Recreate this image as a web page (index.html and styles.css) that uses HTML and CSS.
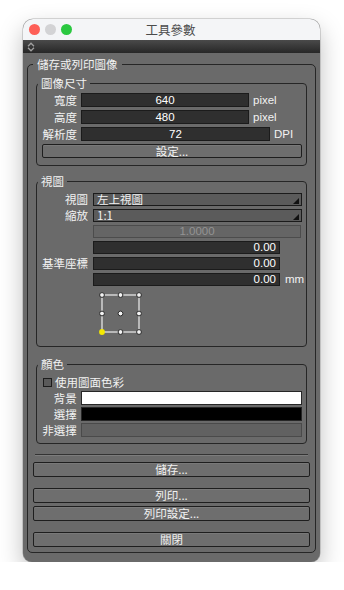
FILE: index.html
```html
<!DOCTYPE html>
<html lang="zh-Hant">
<head>
    <meta charset="UTF-8">
    <meta name="viewport" content="width=device-width, initial-scale=1.0">
    <title>工具參數</title>
    <link rel="stylesheet" href="styles.css">
</head>
<body>

    <div class="window">
        <header class="titlebar">
            <div class="lights">
                <span class="light red"></span>
                <span class="light gray"></span>
                <span class="light green"></span>
            </div>
            <div class="title">工具參數</div>
        </header>

        <div class="toolstrip">
            <svg class="strip-icon" width="8" height="10" viewBox="0 0 8 10">
                <path d="M1 4.2 L4 1.2 L7 4.2 M1 5.8 L4 8.8 L7 5.8" fill="none" stroke="#a0a0a0" stroke-width="1.3"/>
            </svg>
        </div>

        <main class="content">
            <fieldset class="group outer">
                <legend>儲存或列印圖像</legend>

                <!-- image size -->
                <fieldset class="group sub size-group">
                    <legend>圖像尺寸</legend>
                    <div class="row">
                        <span class="label">寬度</span>
                        <span class="field dark w168">640</span>
                        <span class="unit">pixel</span>
                    </div>
                    <div class="row">
                        <span class="label">高度</span>
                        <span class="field dark w168">480</span>
                        <span class="unit">pixel</span>
                    </div>
                    <div class="row">
                        <span class="label">解析度</span>
                        <span class="field dark w189">72</span>
                        <span class="unit">DPI</span>
                    </div>
                    <button class="btn btn-small">設定...</button>
                </fieldset>

                <!-- view -->
                <fieldset class="group sub view-group">
                    <legend>視圖</legend>
                    <div class="view-grid">
                        <span class="label">視圖</span>
                        <span class="select">左上視圖
                            <svg class="caret" width="6" height="6" viewBox="0 0 6 6"><polygon points="0,6 6,6 6,0" fill="#111"/></svg>
                        </span>

                        <span class="label">縮放</span>
                        <span class="select">1:1
                            <svg class="caret" width="6" height="6" viewBox="0 0 6 6"><polygon points="0,6 6,6 6,0" fill="#111"/></svg>
                        </span>

                        <span class="field disabled scale">1.0000</span>

                        <span class="label base-label">基準座標</span>
                        <span class="field dark coord">0.00</span>
                        <span class="field dark coord">0.00</span>
                        <span class="field dark coord">0.00</span>
                        <span class="unit mm">mm</span>

                        <svg class="anchor" width="44" height="44" viewBox="0 0 44 44">
                            <rect x="3" y="3" width="37" height="37" fill="none" stroke="#dcdcdc" stroke-width="1.4"/>
                            <g fill="#f4f4f4" stroke="#2a2a2a" stroke-width="1">
                                <circle cx="3" cy="3" r="2.4"/>
                                <circle cx="21.5" cy="3" r="2.4"/>
                                <circle cx="40" cy="3" r="2.4"/>
                                <circle cx="3" cy="21.5" r="2.4"/>
                                <circle cx="21.5" cy="21.5" r="2.4"/>
                                <circle cx="40" cy="21.5" r="2.4"/>
                                <circle cx="21.5" cy="40" r="2.4"/>
                                <circle cx="40" cy="40" r="2.4"/>
                            </g>
                            <circle cx="3" cy="40" r="2.9" fill="#f5e900"/>
                        </svg>
                    </div>
                </fieldset>

                <!-- colour -->
                <fieldset class="group sub color-group">
                    <legend>顏色</legend>
                    <label class="check-row">
                        <span class="checkbox"></span>
                        <span>使用圖面色彩</span>
                    </label>
                    <div class="row row-color">
                        <span class="label">背景</span>
                        <span class="swatch white"></span>
                    </div>
                    <div class="row row-color">
                        <span class="label">選擇</span>
                        <span class="swatch black"></span>
                    </div>
                    <div class="row row-color">
                        <span class="label">非選擇</span>
                        <span class="swatch none"></span>
                    </div>
                </fieldset>

                <div class="separator"></div>

                <button class="btn save">儲存...</button>
                <button class="btn print">列印...</button>
                <button class="btn print-setup">列印設定...</button>
                <button class="btn close">關閉</button>
            </fieldset>
        </main>
    </div>

</body>
</html>
```

FILE: styles.css
```css
:root {
    --panel: #6a6a6a;
    --frame: #262626;
    --field-dark: #2f2f2f;
    --text: #f2f2f2;
    --font-ui: "Liberation Sans", "Noto Sans CJK TC", sans-serif;
}

body {
    margin: 0;
    background: #ffffff;
    font-family: var(--font-ui);
    color: var(--text);
}

/* --- Window chrome --- */
.window {
    width: 297px;
    margin: 19px 0 0 23px;
    background: var(--panel);
    border-radius: 10px 10px 9px 9px;
    overflow: hidden;
    box-shadow: 0 0 0 0.5px rgba(0, 0, 0, 0.28), 0 10px 24px rgba(0, 0, 0, 0.26);
}

.titlebar {
    height: 21px;
    background: #f4f5f7;
    display: grid;
    grid-template-columns: 1fr auto 1fr;
    align-items: center;
}

.lights {
    display: flex;
    gap: 5px;
    padding-left: 6px;
}

.light {
    width: 11px;
    height: 11px;
    border-radius: 50%;
}

.light.red { background: #fe5f57; }
.light.gray { background: #d3d3d5; }
.light.green { background: #2bc840; }

.title {
    font-family: "Noto Sans CJK TC", sans-serif;
    font-size: 12.5px;
    line-height: 21px;
    color: #4b4b4b;
    padding-right: 2px;
}

.toolstrip {
    height: 13px;
    background: linear-gradient(#4a4a4a, #272727);
    display: flex;
    align-items: center;
    padding-left: 4px;
}

.content {
    padding: 4px 4px 9px;
}

/* --- Group boxes --- */
.group {
    margin: 0;
    border: 1px solid var(--frame);
    border-radius: 5px;
    min-width: 0;
}

.group legend {
    font-family: "Noto Sans CJK TC", sans-serif;
    font-size: 11.5px;
    line-height: 14px;
    color: var(--text);
}

.outer {
    padding: 0 5px 5px;
}

.outer > legend {
    padding: 0 4px;
}

.sub {
    margin: 0 3px;
    padding: 0 4px 7px 4px;
    border-radius: 4px;
}

.sub > legend {
    padding: 0 3px;
    margin-left: -3px;
}

.size-group { margin-top: 5px; padding-top: 3px; }
.view-group { margin-top: 8px; padding-top: 5px; padding-bottom: 10px; }
.color-group { margin-top: 10px; padding-top: 4px; padding-bottom: 6px; }

/* --- Rows --- */
.row {
    display: flex;
    align-items: center;
    height: 14px;
    margin-bottom: 3px;
}

.label {
    font-family: "Noto Sans CJK TC", sans-serif;
    font-size: 11.5px;
    line-height: 14px;
    width: 36px;
    margin-right: 4px;
    text-align: right;
    white-space: nowrap;
    color: var(--text);
}

.unit {
    font-size: 11.5px;
    margin-left: 4px;
    color: var(--text);
}

.field {
    box-sizing: border-box;
    height: 14px;
    font-size: 11.5px;
    line-height: 12px;
    text-align: center;
    border: 1px solid #1b1b1b;
    color: #ffffff;
}

.field.dark {
    background: var(--field-dark);
}

.w168 { width: 168px; }
.w189 { width: 189px; }

/* --- View grid --- */
.view-grid {
    display: grid;
    grid-template-columns: 46px 187px auto;
    column-gap: 5px;
    row-gap: 3px;
    padding-left: 1px;
    align-items: center;
}

.view-grid .label {
    width: auto;
    margin: 0;
    line-height: 13px;
}

.select {
    grid-column: 2 / 4;
    box-sizing: border-box;
    width: 209px;
    height: 13px;
    background: #5b5b5b;
    border: 1px solid #1b1b1b;
    font-family: "Noto Sans CJK TC", sans-serif;
    font-size: 11.5px;
    line-height: 11px;
    padding-left: 3px;
    display: flex;
    justify-content: space-between;
    align-items: center;
}

.caret {
    margin-right: 2px;
    margin-top: 2px;
}

.view-grid .field {
    height: 13px;
    line-height: 11px;
}

.field.disabled {
    grid-column: 2 / 4;
    width: 208px;
    background: #656565;
    border-color: #4c4c4c;
    color: #939393;
}

.coord {
    grid-column: 2;
    text-align: right;
    padding-right: 3px;
}

.base-label {
    grid-column: 1;
    grid-row: 4 / 7;
}

.mm {
    grid-column: 3;
    grid-row: 6;
    margin-left: 0;
    line-height: 13px;
}

.anchor {
    grid-column: 2;
    margin: 3px 0 0 6px;
}

/* --- Colour group --- */
.check-row {
    display: flex;
    align-items: center;
    height: 14px;
    margin-bottom: 2px;
    font-family: "Noto Sans CJK TC", sans-serif;
    font-size: 11.5px;
    line-height: 14px;
}

.checkbox {
    box-sizing: border-box;
    width: 9px;
    height: 9px;
    margin: 0 3px 0 2px;
    background: #5a5a5a;
    border: 1px solid #1c1c1c;
}

.row-color {
    margin-bottom: 2px;
}

.row-color:last-child {
    margin-bottom: 0;
}

.swatch {
    box-sizing: border-box;
    width: 222px;
    height: 14px;
    border: 1px solid #262626;
}

.swatch.white { background: #ffffff; }
.swatch.black { background: #000000; }
.swatch.none { background: #616161; border-color: #4a4a4a; }

/* --- Separator & buttons --- */
.separator {
    margin: 10px 2px 0;
    border-top: 1px solid #333333;
    border-bottom: 1px solid #7c7c7c;
}

.btn {
    display: block;
    box-sizing: border-box;
    width: 100%;
    height: 15px;
    padding: 0;
    background: #6e6e6e;
    border: 1px solid #1e1e1e;
    border-radius: 2px;
    box-shadow: inset 0 1px 0 rgba(255, 255, 255, 0.08);
    font-family: "Noto Sans CJK TC", sans-serif;
    font-size: 11.5px;
    line-height: 13px;
    color: var(--text);
}

.btn-small {
    width: calc(100% - 1px);
    height: 14px;
    line-height: 12px;
    margin: 0 0 0 1px;
}

.save { margin-top: 6px; }
.print { margin-top: 11px; }
.print-setup { margin-top: 3px; }
.close { margin-top: 11px; }
```
